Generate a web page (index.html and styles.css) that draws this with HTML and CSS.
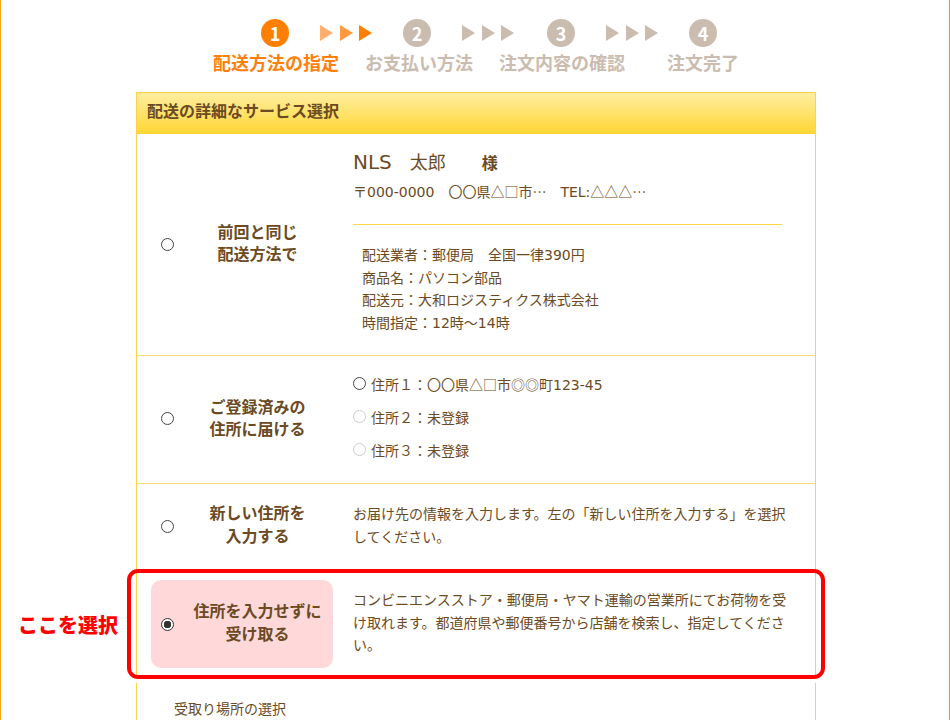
FILE: index.html
```html
<!DOCTYPE html>
<html lang="ja">
<head>
  <meta charset="UTF-8" />
  <title>配送方法の指定</title>
  <link rel="stylesheet" href="styles.css">
</head>
<body>
<div class="page">

  <div class="steps">
    <div class="marks">
      <span class="num now">1</span>
      <span class="arrows now"><i class="a1"></i><i class="a2"></i><i></i></span>
      <span class="num">2</span>
      <span class="arrows"><i></i><i></i><i></i></span>
      <span class="num num3">3</span>
      <span class="arrows"><i></i><i></i><i></i></span>
      <span class="num">4</span>
    </div>
    <div class="labels">
      <span class="now">配送方法の指定</span>
      <span>お支払い方法</span>
      <span>注文内容の確認</span>
      <span class="last">注文完了</span>
    </div>
  </div>

  <div class="card">
    <h2>配送の詳細なサービス選択</h2>

    <div class="row row1">
      <div class="pick">
        <input type="radio" name="ship">
        <p>前回と同じ<br>配送方法で</p>
      </div>
      <div class="body">
        <p class="name"><span class="lat">NLS</span>　太郎　　<b>様</b></p>
        <p class="addr">〒<span class="lat">000-0000</span>　〇〇県△□市…　<span class="lat">TEL:</span>△△△…</p>
        <hr>
        <p class="detail">配送業者：郵便局　全国一律<span class="lat">390</span>円<br>商品名：パソコン部品<br>配送元：大和ロジスティクス株式会社<br>時間指定：<span class="lat">12</span>時～<span class="lat">14</span>時</p>
      </div>
    </div>

    <div class="row row2">
      <div class="pick">
        <input type="radio" name="ship">
        <p>ご登録済みの<br>住所に届ける</p>
      </div>
      <div class="body">
        <label class="opt"><input type="radio" name="addr">住所１：〇〇県△□市◎◎町<span class="lat">123-45</span></label>
        <label class="opt"><input type="radio" name="addr" disabled>住所２：未登録</label>
        <label class="opt"><input type="radio" name="addr" disabled>住所３：未登録</label>
      </div>
    </div>

    <div class="row row3">
      <div class="pick">
        <input type="radio" name="ship">
        <p>新しい住所を<br>入力する</p>
      </div>
      <div class="body">
        <p>お届け先の情報を入力します。左の「新しい住所を入力する」を選択してください。</p>
      </div>
    </div>

    <div class="row row4">
      <div class="pick selected">
        <input type="radio" name="ship" checked>
        <p>住所を入力せずに<br>受け取る</p>
      </div>
      <div class="body">
        <p>コンビニエンスストア・郵便局・ヤマト運輸の営業所にてお荷物を受け取れます。都道府県や郵便番号から店舗を検索し、指定してください。</p>
      </div>
      <div class="frame"></div>
      <div class="callout">ここを選択</div>
    </div>

    <p class="place">受取り場所の選択</p>
  </div>

</div>
</body>
</html>
```

FILE: styles.css
```css
* { box-sizing: border-box; }
html, body { margin: 0; padding: 0; }
body {
  font-family: "Noto Sans CJK JP", sans-serif;
  font-size: 14px;
  color: #6b4a24;
  background: #fff;
}
p { margin: 0; }
.lat { font-family: "DejaVu Sans", sans-serif; line-height: 1; }

.page {
  height: 720px;
  overflow: hidden;
  border-left: 1px solid #f7a11a;
  border-right: 1px solid #e8912a;
}

/* steps */
.steps { height: 92px; padding-top: 19px; }
.marks { display: flex; align-items: center; padding-left: 260px; }
.num {
  width: 28px;
  height: 28px;
  border-radius: 50%;
  background: #cbbcb0;
  color: #fff;
  font-size: 18px;
  font-weight: bold;
  line-height: 28px;
  text-align: center;
}
.num.now { background: #ff7f00; }
.num3 { margin-left: 2px; }
.arrows { display: flex; gap: 6.5px; margin: 0 31px; }
.arrows i {
  width: 0;
  height: 0;
  border-left: 13px solid #cbbcb0;
  border-top: 8px solid transparent;
  border-bottom: 8px solid transparent;
}
.arrows.now i { border-left-color: #ff7f00; }
.arrows.now i.a1 { border-left-color: #ffb070; }
.arrows.now i.a2 { border-left-color: #ff9a40; }
.labels {
  display: flex;
  gap: 26px;
  padding-left: 212px;
  margin-top: 2px;
  color: #cbbcb0;
  font-size: 18px;
  font-weight: bold;
  line-height: 26px;
}
.labels .now { color: #ff7f0f; }
.labels .last { margin-left: 16px; }

/* card */
.card {
  width: 680px;
  min-height: 640px;
  margin-left: 135px;
  border: 1px solid #fbd24f;
  border-width: 0 1px;
}
.card h2 {
  margin: 0;
  height: 42px;
  padding-left: 10px;
  border: 1px solid #fbd24f;
  border-width: 1px 0 0;
  background: linear-gradient(#ffeea0, #ffd633);
  font-size: 16px;
  line-height: 35px;
}

.row {
  display: flex;
  gap: 20px;
  padding-left: 14px;
  border-bottom: 1px solid #fbd77f;
}
.row1 { height: 222px; }
.row2 { height: 128px; }
.row3 { height: 86px; border-bottom: 0; }
.row4 { position: relative; height: 108px; padding-top: 10px; border-bottom: 0; }

input[type="radio"] {
  appearance: none;
  flex: none;
  width: 13px;
  height: 13px;
  border: 1px solid #444;
  border-radius: 50%;
  background: #fff;
}
input[type="radio"]:checked {
  border-color: #333;
  background: radial-gradient(circle, #333 0 3.5px, #fff 4px);
}
input[type="radio"]:disabled { border-color: #ccc; }

.pick {
  display: flex;
  align-items: center;
  flex: 0 0 182px;
  padding-left: 10px;
  font-size: 16px;
  font-weight: bold;
  line-height: 22.5px;
  text-align: center;
}
.pick input { margin: 0 8px 0 0; }
.row2 .pick input, .row3 .pick input { margin-bottom: 2px; }
.pick p { flex: 1; margin-bottom: 5px; }
.row3 .pick p { margin-bottom: 7px; }
.pick.selected { height: 88px; background: #ffd9d9; border-radius: 10px; }

.body { width: 440px; line-height: 22.5px; }
.row1 .body { padding-top: 12px; }
.row3 .body { padding-top: 18px; }
.row4 .body { padding-top: 8px; }

.name { font-size: 18px; line-height: 30px; }
.name .lat { font-size: 20px; }
.name b { font-size: 16px; }
.addr { margin-top: 1px; line-height: 26px; }
.body hr {
  width: 429px;
  margin: 20px 0 18px;
  border: 0;
  border-top: 1px solid #ffd54a;
}
.detail { padding-left: 9px; }

.row2 .body { padding-top: 12px; }
.opt { display: flex; align-items: center; height: 33px; }
.opt input { margin: 0 5px 2px 0; }

.frame {
  position: absolute;
  left: -10px;
  top: -1px;
  width: 698px;
  height: 110px;
  border: 4px solid #f00;
  border-radius: 11px;
  box-shadow: 0 4px 0 #fff;
}
.callout {
  position: absolute;
  left: -119px;
  top: 40px;
  color: #f00;
  font-size: 20px;
  font-weight: 900;
  line-height: 30px;
  white-space: nowrap;
}

.place { margin: 19px 0 0 37px; line-height: 22px; }
```
